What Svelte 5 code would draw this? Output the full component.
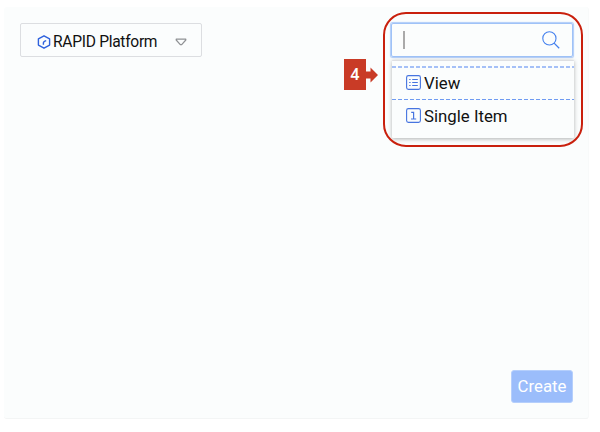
<script>
  const items = [
    { label: 'View', icon: 'list' },
    { label: 'Single Item', icon: 'one' }
  ];
</script>

<main>
  <section class="panel">
    <header>
      <div class="select">
        <svg class="hex" width="14" height="14" viewBox="0 0 14 14" fill="none" stroke="#2f62dd" stroke-width="1.4">
          <path d="M7 .8 12.6 3.9V10.1L7 13.2 1.4 10.1V3.9Z" stroke-linejoin="round" />
          <path d="M6.4 9.8V8Q6.4 6.2 9.2 5.6" />
        </svg>
        <span>RAPID Platform</span>
        <svg class="caret" width="12" height="8" viewBox="0 0 12 8" fill="none" stroke="#8f9194" stroke-width="1.2" stroke-linejoin="round">
          <path d="M1.2 1.2H10.8V2L6.7 6.7H5.3L1.2 2Z" />
        </svg>
      </div>

      <div class="picker">
        <div class="search">
          <i class="cursor"></i>
          <svg width="18" height="18" viewBox="0 0 18 18" fill="none" stroke="#4480ee" stroke-width="1.1">
            <circle cx="7.4" cy="7.4" r="6.6" />
            <path d="M12.1 12.1 17.2 17.2" stroke-width="1.3" />
          </svg>
        </div>
        <div class="menu">
          {#each items as item}
            <div class="item">
              <svg width="15" height="15" viewBox="0 0 15 15" fill="none" stroke="#4674e0" stroke-width="1.1">
                <rect x=".6" y=".6" width="13.8" height="13.8" rx="1.8" />
                {#if item.icon === 'list'}
                  <path d="M3.2 4.5H4.6M3.2 7.5H4.6M3.2 10.5H4.6M6.2 4.5H11.8M6.2 7.5H11.8M6.2 10.5H11.8" />
                {:else}
                  <path d="M5.2 4.4H7.6V11M5 11H10.2" stroke-width="1.2" />
                {/if}
              </svg>
              <span>{item.label}</span>
            </div>
          {/each}
        </div>
        <div class="outline"></div>
        <div class="callout">
          <b>4</b>
          <svg width="12" height="16" viewBox="0 0 12 16" fill="#c93b26">
            <path d="M0 4.5H4.5V.5L12 8 4.5 15.5V11.5H0Z" />
          </svg>
        </div>
      </div>
    </header>

    <footer><button>Create</button></footer>
  </section>
</main>

<style>
  :global(body) { background: #fff; }
  main {
    box-sizing: border-box;
    height: 432px;
    padding: 7px 11px 13px 4px;
    font-family: Roboto, "Liberation Sans", sans-serif;
    color: #111;
  }
  .panel {
    box-sizing: border-box;
    height: 412px;
    padding: 16px 15px 15px 16px;
    display: flex;
    flex-direction: column;
    justify-content: space-between;
    background: #fbfdfd;
    border-radius: 3px;
    border-bottom: 1px solid #f3f5f5;
    border-right: 1px solid #f8fafa;
  }
  header { display: flex; justify-content: space-between; align-items: flex-start; }
  .select {
    box-sizing: border-box;
    width: 182px;
    height: 34px;
    padding: 3px 14px 0 16px;
    display: flex;
    align-items: center;
    border: 1px solid #dcdee1;
    border-radius: 2px;
    font-size: 15.6px;
    letter-spacing: -0.3px;
    white-space: nowrap;
  }
  .hex { margin-right: 2px; }
  .caret { margin-left: auto; }
  .picker { position: relative; width: 182px; }
  .search {
    box-sizing: border-box;
    height: 34px;
    padding: 0 12px 0 11px;
    display: flex;
    align-items: center;
    justify-content: space-between;
    border: 1px solid #9fc2f7;
    border-radius: 2px;
    box-shadow: 0 0 1px 0.5px #b0cdf9;
  }
  .cursor { width: 1.5px; height: 18px; background: #aaa; }
  .menu {
    box-sizing: border-box;
    height: 78px;
    margin: 3px -1px 0 1px;
    padding-top: 5px;
    background: #fbfdfd;
    border-top: 1px solid #dedfe2;
    border-radius: 1px;
    box-shadow: 0 1px 4px #0000004d;
  }
  .item {
    box-sizing: border-box;
    height: 33px;
    padding: 0 0 0 14px;
    display: flex;
    align-items: center;
    gap: 3px;
    background: repeating-linear-gradient(90deg, #6f9bf2 0 4px, #fbfdfd 4px 6px) top / 100% 1px no-repeat;
    font-size: 16.8px;
  }
  .item:first-child {
    background: repeating-linear-gradient(90deg, #a5c0f7 0 4px, #fbfdfd 4px 6px) top / 100% 2px no-repeat;
  }
  .outline {
    position: absolute;
    box-sizing: border-box;
    left: -8px;
    top: -11px;
    width: 200px;
    height: 135px;
    border: 2px solid #c9200d;
    border-radius: 23px;
  }
  .callout { position: absolute; left: -47px; top: 36px; display: flex; align-items: center; }
  .callout b {
    width: 22px;
    height: 31px;
    background: #c93b26;
    color: #fff;
    font: 600 15.5px/31px "Noto Sans", "Open Sans", sans-serif;
    text-align: center;
  }
  footer { display: flex; justify-content: flex-end; }
  button {
    width: 62px;
    height: 33px;
    padding: 0 0 1px;
    border: 1px solid #b5cffc;
    border-radius: 3px;
    background: #9bbdfb;
    color: #fff;
    font: 16.8px Roboto, sans-serif;
  }
</style>
